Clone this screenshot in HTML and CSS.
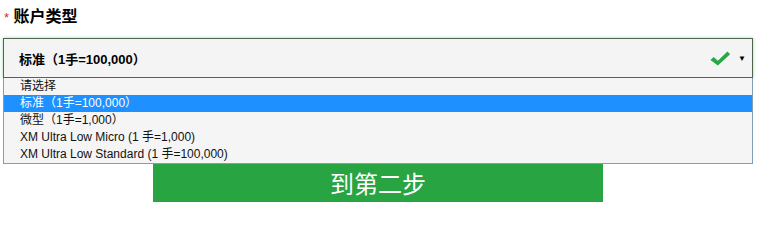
FILE: index.html
```html
<!DOCTYPE html>
<html lang="zh-CN">
<head>
    <meta charset="UTF-8">
    <meta name="viewport" content="width=device-width, initial-scale=1.0">
    <title>账户类型</title>
    <link rel="stylesheet" href="styles.css">
</head>
<body>
    <div class="form-group">
        <label class="field-label"><span class="required">*</span> 账户类型</label>

        <div class="select-box">
            <span class="select-value">标准（1手=100,000）</span>
            <span class="select-icons">
                <svg class="check" width="22" height="17" viewBox="0 0 20 16">
                    <path d="M1 9.5 L4 6.5 L8 10 L17 1.5 L19.5 4 L8 14.5 Z" fill="#28a745"/>
                </svg>
                <span class="arrow">&#9660;</span>
            </span>
        </div>

        <ul class="option-list">
            <li>请选择</li>
            <li class="selected">标准（1手=100,000）</li>
            <li>微型（1手=1,000）</li>
            <li>XM Ultra Low Micro (1 手=1,000)</li>
            <li>XM Ultra Low Standard (1 手=100,000)</li>
        </ul>
    </div>

    <button class="next-btn">到第二步</button>
</body>
</html>
```

FILE: styles.css
```css
body {
    margin: 0;
    font-family: 'Liberation Sans', 'Noto Sans CJK SC', sans-serif;
    color: #000;
    background-color: #fff;
}
.form-group {
    padding-left: 3px;
    width: 750px;
}
.field-label {
    display: block;
    height: 38px;
    padding-left: 1px;
    font-size: 16px;
    font-weight: bold;
    line-height: 34px;
}
.required {
    color: #d9262c;
    font-size: 13px;
    font-weight: normal;
}
.select-box {
    display: flex;
    align-items: center;
    justify-content: space-between;
    box-sizing: border-box;
    height: 40px;
    padding: 0 6px 0 15px;
    background-color: #f4f4f4;
    border: 1px solid #52654f;
    box-shadow: 0 0 3px rgba(40, 167, 69, 0.45);
}
.select-value {
    font-size: 13px;
    font-weight: bold;
}
.select-icons {
    display: flex;
    align-items: center;
    gap: 7px;
}
.check {
    display: block;
}
.arrow {
    font-size: 8px;
    color: #000;
}
.option-list {
    list-style: none;
    margin: 0;
    padding: 0;
    background-color: #f5f5f5;
    border: 1px solid #7f9db9;
    border-top: none;
}
.option-list li {
    height: 17px;
    line-height: 17px;
    padding-left: 16px;
    font-size: 12px;
    color: #111;
}
.option-list li.selected {
    background-color: #1e90ff;
    color: #fff;
}
.next-btn {
    display: block;
    width: 450px;
    height: 38px;
    margin: 0 0 0 153px;
    padding: 0;
    border: none;
    background-color: #28a443;
    color: #fff;
    font-family: 'Noto Sans CJK SC', sans-serif;
    font-size: 24px;
    line-height: 38px;
    cursor: pointer;
}
```
